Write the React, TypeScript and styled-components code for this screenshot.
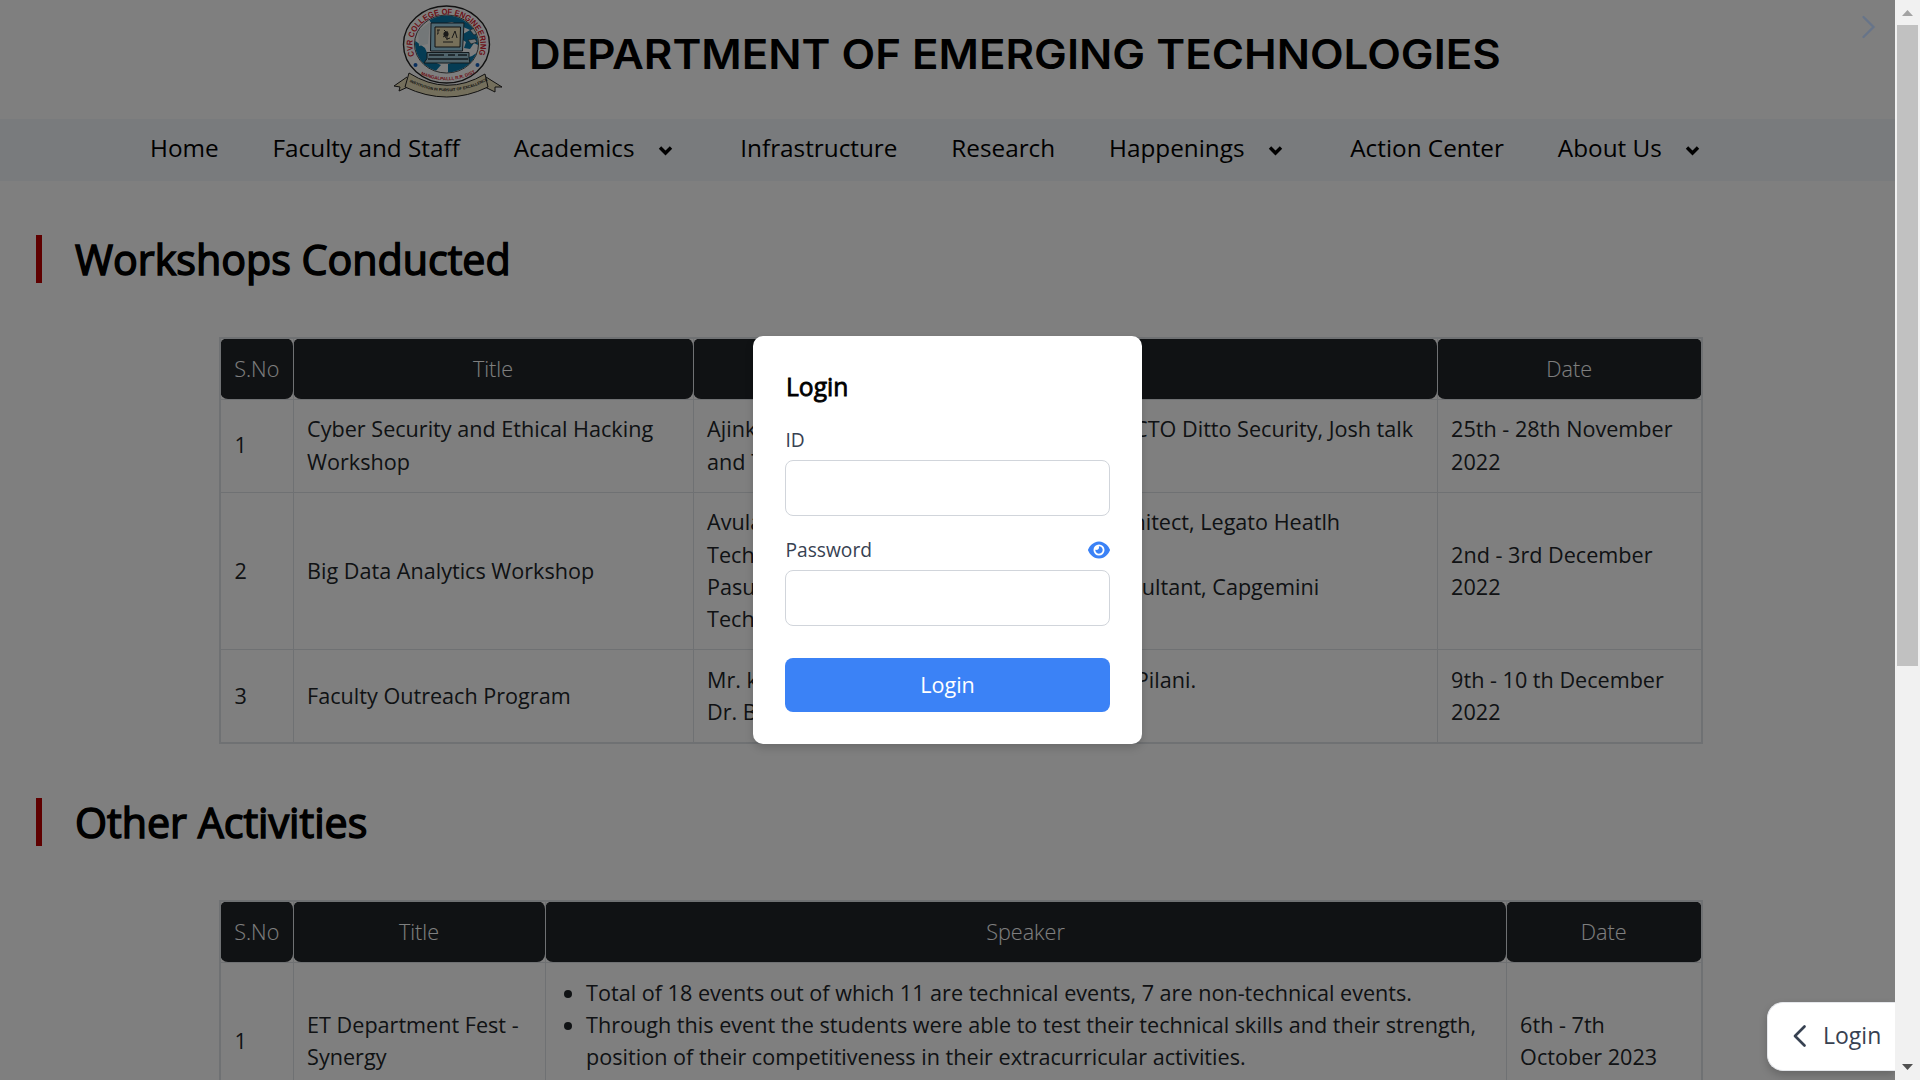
import React from "react";
import styled, { createGlobalStyle } from "styled-components";
import { FaEye } from "react-icons/fa6";

const sans = `"Open Sans", "Noto Sans", sans-serif`;

const GlobalStyle = createGlobalStyle`
  * { box-sizing: border-box; }
  html, body { margin: 0; height: 1080px; overflow: hidden; }
  body { background: #fff; font-family: ${sans}; color: #000; }
  h1, h2, p, ul { margin: 0; }
`;

const Window = styled.div`
  display: flex;
  width: 1920px;
  height: 1080px;
  overflow: hidden;
`;

const Page = styled.div`
  position: relative;
  width: 1895px;
  height: 1080px;
  overflow: hidden;
  background: #fff;
`;

const Header = styled.header`
  display: flex;
  height: 119px;
  padding-left: 380px;
`;

const Logo = styled.svg`
  display: block;
  width: 124px;
  height: 110px;
  flex: none;
`;

const SiteTitle = styled.h1`
  margin: 24px 0 0 25px;
  height: 60px;
  font: 600 41.5px/60px Inter, ${sans};
  white-space: nowrap;
  transform: scaleX(1.056);
  transform-origin: 0 0;
`;

const Nav = styled.nav`
  display: flex;
  gap: 53.9px;
  height: 62px;
  padding-left: 150px;
  background: #f3f6fa;
`;

const NavItem = styled.a`
  display: flex;
  align-items: center;
  height: 57px;
  font-size: 24.3px;
  font-weight: 400;
  white-space: nowrap;
`;

const Caret = styled.svg`
  width: 15px;
  height: 11px;
  margin: 5px 13.5px 0 23.300px;
`;

const SectionHead = styled.div`
  display: flex;
  align-items: center;
  height: 48px;
  margin: 53.9px 0 53.9px 36px;
  padding-left: 33px;
  border-left: 6px solid #bf0000;
`;

const SectionTitle = styled.h2`
  font-size: 41.2px;
  font-weight: 400;
  line-height: 48px;
  -webkit-text-stroke: 1.5px #000;
  white-space: nowrap;
`;

const Table = styled.table`
  width: 1484px;
  margin-left: 219px;
  table-layout: fixed;
  border-collapse: collapse;
  border: 2px solid #dee2e6;
  font-size: 21.6px;
  line-height: 32.4px;
  color: #212529;
`;

const Th = styled.th`
  padding: 13.8px 0 13.6px;
  border: 1px solid #dee2e6;
  border-radius: 8px;
  background: #212529;
  color: #fff;
  font-weight: 300;
  text-align: center;
`;

const Td = styled.td`
  padding: 13.6px;
  border: 1px solid #dee2e6;
  vertical-align: middle;
  white-space: nowrap;
`;

const SpreadLine = styled.div<{ $w: number }>`
  display: flex;
  justify-content: space-between;
  width: ${(p) => p.$w}px;
`;

const Bullets = styled.ul`
  padding-left: 27px;
`;

const Backdrop = styled.div`
  position: absolute;
  inset: 0;
  display: flex;
  align-items: center;
  justify-content: center;
  background: rgba(0, 0, 0, 0.5);
`;

const Modal = styled.div`
  width: 389px;
  height: 408px;
  padding: 31px 32px 32px;
  border-radius: 10px;
  background: #fff;
  box-shadow: 0 4px 8px rgba(0, 0, 0, 0.16);
`;

const ModalTitle = styled.h2`
  height: 40px;
  padding-left: 1px;
  font-size: 24.6px;
  font-weight: 400;
  line-height: 40px;
  -webkit-text-stroke: 0.8px #000;
`;

const Label = styled.label<{ $top: number }>`
  display: flex;
  align-items: center;
  justify-content: space-between;
  height: 30px;
  margin: ${(p) => p.$top}px 0 5px;
  padding-left: 0.5px;
  color: #374151;
  font-size: 19.2px;
  line-height: 30px;
`;

const Field = styled.input`
  display: block;
  width: 325px;
  height: 56px;
  border: 1px solid #d1d5db;
  border-radius: 8px;
  background: #fff;
`;

const Submit = styled.button`
  display: block;
  width: 325px;
  height: 54px;
  margin-top: 32px;
  padding: 0;
  border: 0;
  border-radius: 8px;
  background: #3b82f6;
  color: #fff;
  font: 400 21.6px/54px ${sans};
`;

const DrawerArrow = styled.svg`
  position: absolute;
  left: 1861px;
  top: 15px;
  width: 16px;
  height: 24px;
`;

const LoginTab = styled.div`
  position: absolute;
  right: 0;
  bottom: 9px;
  display: flex;
  align-items: center;
  width: 128px;
  height: 69px;
  padding: 0 0 3px 24px;
  border: 1px solid #e5e7eb;
  border-right: 0;
  border-radius: 16px 0 0 16px;
  background: #fff;
  box-shadow: 0 4px 8px rgba(0, 0, 0, 0.2);
  color: #374151;
  font-size: 23px;
  font-weight: 400;
`;

const TabArrow = styled.svg`
  width: 16px;
  height: 24px;
  margin: 2px 15px 0 0;
`;

const Scrollbar = styled.div`
  display: flex;
  flex-direction: column;
  align-items: center;
  width: 25px;
  height: 1080px;
  background: #f1f1f1;
`;

const ArrowBox = styled.svg`
  width: 25px;
  height: 25px;
`;

const Thumb = styled.div`
  width: 21px;
  height: 641px;
  margin-bottom: 389px;
  background: #c1c1c1;
`;

const Chevron = () => (
  <Caret viewBox="0 0 15 11">
    <path d="M2 2.500l5.500 5.500 5.500-5.500" fill="none" stroke="#000" strokeWidth="3.400" />
  </Caret>
);

const navItems: [string, boolean][] = [
  ["Home", false],
  ["Faculty and Staff", false],
  ["Academics", true],
  ["Infrastructure", false],
  ["Research", false],
  ["Happenings", true],
  ["Action Center", false],
  ["About Us", true],
];

function CollegeLogo() {
  return (
    <Logo viewBox="380 0 124 110">
      <defs>
        <path id="arcTop" d="M415.500 57.500 A34 30.500 0 1 1 477.500 57.500" />
        <path id="arcBottom" d="M418 73 Q447 88 477 72" />
        <path id="ribbonLine" d="M406 80 Q447 103 490 79" />
        <clipPath id="globe"><ellipse cx="446.500" cy="44" rx="31.500" ry="28.500" /></clipPath>
      </defs>
      <ellipse cx="446.500" cy="44.500" rx="43" ry="38.500" fill="#fff" stroke="#222" strokeWidth="1.400" />
      <ellipse cx="446.500" cy="44" rx="32" ry="29" fill="#fff" stroke="#222" strokeWidth=".8" />
      <g clipPath="url(#globe)">
        <path d="M428 18 Q447 8 466 18 L478 30 L480 46 L474 43 L470 49 L464 48 L466 42 L458 37 L470 30 L452 22 L433 26 Z" fill="#0a78a8" />
        <path d="M414 40 L425 48 L430 60 L441 65 L434 73 Q416 65 414 40Z M448 64 L472 56 L478 52 L474 64 L460 74 L448 74Z" fill="#0a78a8" />
        <path d="M418 31 L430 22 L428 44 L419 46Z" fill="#e7eff1" />
        <path d="M470 30l5-2 3 5-4 2zM468 40l7-1 2 3-6 2z" fill="#e7eff1" stroke="#222" strokeWidth=".5" />
      </g>
      <path d="M431 23h33l-1.500 28h-32z" fill="#9ed2e6" stroke="#25313b" />
      <path d="M435 27h25.500l-.5 20h-25z" fill="#eee1b4" stroke="#222" />
      <path d="M437 30h3m-2 0v4h-1m7-4l4 4-5 3m4-6v9m-4 2h10m-1-4l3-7 2 7m-11-5a3 3 0 1 0 4 5" stroke="#333" fill="none" />
      <circle cx="446" cy="34" r="2.600" fill="#333" />
      <path d="M427 52.500h42v6l1 4.500h-46l3-4.500z" fill="#9fc7d6" stroke="#26343c" />
      <path d="M429 55h15m4 0h7m3 0h9m-39 4h40" stroke="#25323a" strokeWidth="1.300" />
      <text fill="#d7202b" fontFamily="Liberation Sans, sans-serif" fontSize="8.300" fontWeight="700" textLength="122" lengthAdjust="spacingAndGlyphs">
        <textPath href="#arcTop" startOffset="2" textLength="122" lengthAdjust="spacingAndGlyphs">CVR COLLEGE OF ENGINEERING</textPath>
      </text>
      <text fill="#d7202b" fontFamily="Liberation Sans, sans-serif" fontSize="4.600" fontWeight="700">
        <textPath href="#arcBottom" startOffset="3">MANGALPALLI, R.R. DIST.</textPath>
      </text>
      <circle cx="415.500" cy="65" r="2" fill="#1660bd" />
      <circle cx="477.500" cy="65" r="2" fill="#1660bd" />
      <path d="M407 77 L394 86 L400 87 L399 91 L410 86 M486 77 L502 87 L495 87 L495 92 L483 86" fill="#e9dfb8" stroke="#222" />
      <path d="M409 73 Q447 97 485 74 L488 87 Q447 107 405 87Z" fill="#e9dfb8" stroke="#222" />
      <text fill="#222" fontFamily="Liberation Sans, sans-serif" fontSize="3.900" fontWeight="700">
        <textPath href="#ribbonLine" startOffset="4">INSTITUTION IN PURSUIT OF EXCELLENCE</textPath>
      </text>
    </Logo>
  );
}

function HeadRow({ labels }: { labels: string[] }) {
  return (
    <thead>
      <tr>{labels.map((l) => <Th key={l}>{l}</Th>)}</tr>
    </thead>
  );
}

function Columns({ widths }: { widths: number[] }) {
  return <colgroup>{widths.map((w, i) => <col key={i} width={w} />)}</colgroup>;
}

const headings = ["S.No", "Title", "Speaker", "Date"];

export default function App() {
  return (
    <Window>
      <GlobalStyle />
      <Page>
        <Header>
          <CollegeLogo />
          <SiteTitle>DEPARTMENT OF EMERGING TECHNOLOGIES</SiteTitle>
        </Header>
        <Nav>
          {navItems.map(([label, menu]) => (
            <NavItem key={label}>{label}{menu && <Chevron />}</NavItem>
          ))}
        </Nav>
        <SectionHead><SectionTitle>Workshops Conducted</SectionTitle></SectionHead>
        <Table>
          <Columns widths={[73, 400, 744, 265]} />
          <HeadRow labels={headings} />
          <tbody>
            <tr>
              <Td>1</Td>
              <Td>Cyber Security and Ethical Hacking<br />Workshop</Td>
              <Td>
                <SpreadLine $w={706}><span>Ajinkya Lohakare, Founder</span><span>CTO Ditto Security, Josh talk</span></SpreadLine>
                and TEDx Speaker
              </Td>
              <Td>25th - 28th November<br />2022</Td>
            </tr>
            <tr>
              <Td>2</Td>
              <Td>Big Data Analytics Workshop</Td>
              <Td>
                <SpreadLine $w={633}><span>Avula Reddy, Data</span><span>Architect, Legato Heatlh</span></SpreadLine>
                Technologies<br />
                <SpreadLine $w={612}><span>Pasupuleti, Senior</span><span>Consultant, Capgemini</span></SpreadLine>
                Technologies
              </Td>
              <Td>2nd - 3rd December<br />2022</Td>
            </tr>
            <tr>
              <Td>3</Td>
              <Td>Faculty Outreach Program</Td>
              <Td>
                <SpreadLine $w={489}><span>Mr. kumar, Professor</span><span>BITS Pilani.</span></SpreadLine>
                Dr. B. Reddy
              </Td>
              <Td>9th - 10 th December<br />2022</Td>
            </tr>
          </tbody>
        </Table>
        <SectionHead><SectionTitle>Other Activities</SectionTitle></SectionHead>
        <Table>
          <Columns widths={[73, 252, 961, 196]} />
          <HeadRow labels={headings} />
          <tbody>
            <tr>
              <Td>1</Td>
              <Td>ET Department Fest -<br />Synergy</Td>
              <Td>
                <Bullets>
                  <li>Total of 18 events out of which 11 are technical events, 7 are non-technical events.</li>
                  <li>Through this event the students were able to test their technical skills and their strength,<br />position of their competitiveness in their extracurricular activities.</li>
                  <li>&nbsp;</li>
                </Bullets>
              </Td>
              <Td>6th - 7th<br />October 2023</Td>
            </tr>
          </tbody>
        </Table>
        <Backdrop>
          <Modal>
            <ModalTitle>Login</ModalTitle>
            <Label $top={18}>ID</Label>
            <Field />
            <Label $top={19}>Password<FaEye size={22} color="#3b82f6" /></Label>
            <Field type="password" />
            <Submit>Login</Submit>
          </Modal>
        </Backdrop>
        <DrawerArrow viewBox="0 0 16 24">
          <path d="M2.500 2l10 10-10 10" fill="none" stroke="#677489" strokeWidth="2.300" strokeLinecap="round" />
        </DrawerArrow>
        <LoginTab>
          <TabArrow viewBox="0 0 16 24">
            <path d="M12.500 2.500L3 12l9.500 9.500" fill="none" stroke="#374151" strokeWidth="2.700" strokeLinecap="round" strokeLinejoin="round" />
          </TabArrow>
          Login
        </LoginTab>
      </Page>
      <Scrollbar>
        <ArrowBox viewBox="0 0 25 25"><path d="M7 16l5.500-6 5.500 6z" fill="#a3a3a3" /></ArrowBox>
        <Thumb />
        <ArrowBox viewBox="0 0 25 25"><path d="M7 9l5.500 6 5.500-6z" fill="#505050" /></ArrowBox>
      </Scrollbar>
    </Window>
  );
}
